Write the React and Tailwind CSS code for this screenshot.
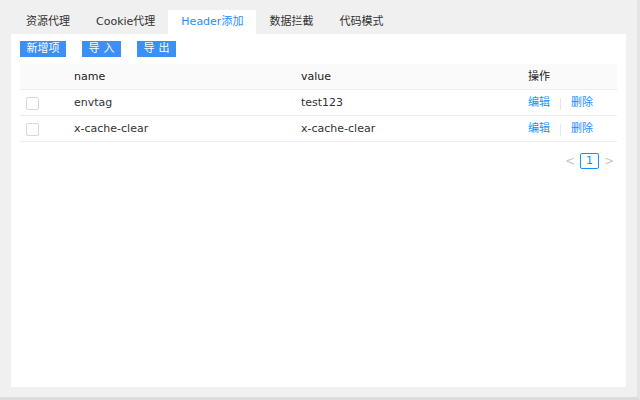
import React from "react";

const font = { fontFamily: '"DejaVu Sans", "Noto Sans CJK SC", sans-serif' };

function Checkbox() {
  return <span className="block w-[13px] h-[13px] border border-[#d9d9d9] rounded-[2px] bg-white" />;
}

export default function App() {
  const rows = [
    ["envtag", "test123"],
    ["x-cache-clear", "x-cache-clear"],
  ];
  const tabs = ["资源代理", "Cookie代理", "Header添加", "数据拦截", "代码模式"];
  return (
    <div style={font} className="w-[640px] h-[400px] bg-[#f0f0f0] text-[11px] text-[#333] flex flex-col border-r-[3px] border-b-[3px] border-r-[#e4e4e4] border-b-[#dcdcdc]">
      <div className="flex h-[34px] pt-[10px] pl-[13px]">
        {tabs.map((t, i) => (
          <div
            key={t}
            className={
              "h-[24px] flex items-center px-[13px] " +
              (i === 2 ? "bg-white text-[#1890ff]" : "text-[#333]")
            }
          >
            {t}
          </div>
        ))}
      </div>
      <div className="ml-[11px] mr-[11px] h-[353px] bg-white flex flex-col px-[9px] pt-[7px]">
        <div className="flex gap-[16px] h-[16px] mb-[7px]">
          <button className="w-[46px] h-[16px] bg-[#3b8ff6] text-white text-[11px] leading-[16px]">新增项</button>
          <button className="w-[39px] h-[16px] bg-[#3b8ff6] text-white text-[11px] leading-[16px] tracking-[4px] pl-[4px]">导入</button>
          <button className="w-[39px] h-[16px] bg-[#3b8ff6] text-white text-[11px] leading-[16px] tracking-[4px] pl-[4px]">导出</button>
        </div>
        <div className="w-[597px]">
          <div className="flex h-[26px] items-center bg-[#fafafa] border-b border-[#eeeeee] text-[#222] pt-[1px]">
            <div className="w-[54px]" />
            <div className="w-[227px]">name</div>
            <div className="w-[227px]">value</div>
            <div>操作</div>
          </div>
          {rows.map(([n, v]) => (
            <div key={n} className="flex h-[26px] items-center border-b border-[#eeeeee] pt-[2px]">
              <div className="w-[54px] pl-[6px]"><Checkbox /></div>
              <div className="w-[227px]">{n}</div>
              <div className="w-[227px]">{v}</div>
              <div className="flex items-center text-[#1890ff]">
                <span>编辑</span>
                <span className="mx-[10px] w-px h-[12px] bg-[#e8e8e8]" />
                <span>删除</span>
              </div>
            </div>
          ))}
          <div className="flex justify-end items-center mt-[10px] gap-[5px] pr-[3px]">
            <span className="text-[#c8c8c8] text-[12px] w-[10px] text-center">&lt;</span>
            <span className="w-[19px] h-[16px] border border-[#1890ff] rounded-[2px] flex items-center justify-center text-[#1890ff] text-[11px]">1</span>
            <span className="text-[#c8c8c8] text-[12px] w-[10px] text-center">&gt;</span>
          </div>
        </div>
      </div>
    </div>
  );
}
